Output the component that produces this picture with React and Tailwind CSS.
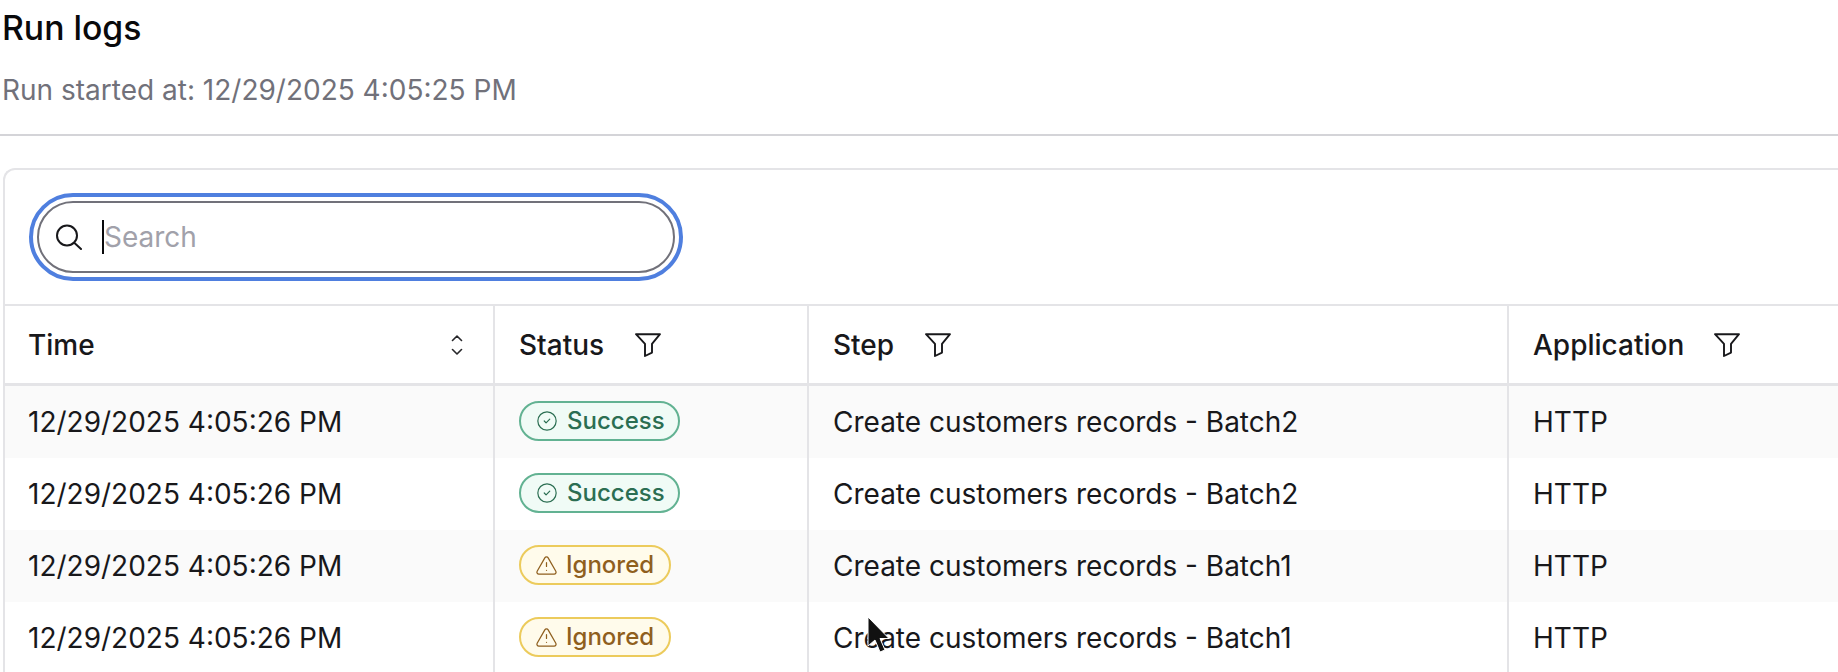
import React from 'react'
import { CircleCheck, TriangleAlert } from 'lucide-react'

const rows = [
  { time: '12/29/2025 4:05:26 PM', status: 'Success', step: 'Create customers records - Batch2', app: 'HTTP' },
  { time: '12/29/2025 4:05:26 PM', status: 'Success', step: 'Create customers records - Batch2', app: 'HTTP' },
  { time: '12/29/2025 4:05:26 PM', status: 'Ignored', step: 'Create customers records - Batch1', app: 'HTTP' },
  { time: '12/29/2025 4:05:26 PM', status: 'Ignored', step: 'Create customers records - Batch1', app: 'HTTP' },
]

const FilterIcon = () => (
  <svg width="26" height="24" viewBox="0 0 26 24" fill="none" stroke="#18181b" strokeWidth="1.9" strokeLinejoin="round">
    <path d="M1 1.2H25L17 10.8V19.6L10 23V10.8Z" />
  </svg>
)

const SortIcon = () => (
  <svg width="12" height="20" viewBox="0 0 12 20" fill="none" stroke="#27272a" strokeWidth="1.6" strokeLinecap="round" strokeLinejoin="round">
    <path d="M1.5 5.5L6 1L10.5 5.5" />
    <path d="M1.5 14.5L6 19L10.5 14.5" />
  </svg>
)

const StatusBadge = ({ status }) => {
  if (status === 'Success') {
    return (
      <span className="mb-[2px] inline-flex h-10 w-[161px] items-center gap-[9px] rounded-full border-2 border-[#62b292] bg-[#f0fbf6] pl-[15px] text-[24px] font-[450] text-[#2b6e52]">
        <CircleCheck size={22} strokeWidth={1.3} className="text-[#2b6e52]" />
        {status}
      </span>
    )
  }
  return (
    <span className="mb-[2px] inline-flex h-10 w-[152px] items-center gap-[8px] rounded-full border-2 border-[#eccb5c] bg-[#fffbeb] pl-[14px] text-[24px] font-[450] text-[#8f5f1e]">
      <TriangleAlert size={23} strokeWidth={1.3} className="text-[#8f5f1e]" />
      {status}
    </span>
  )
}

const App = () => {
  return (
    <div className="relative h-[672px] overflow-hidden bg-white pl-[3px] font-['Inter',sans-serif] text-[#18181b]">
      <h1 className="-ml-[1px] pt-[8px] text-[33.75px] leading-[40px] font-medium text-[#09090b]">Run logs</h1>
      <p className="mt-[22px] -ml-[1px] text-[28px] leading-[40px] text-[#71717a]">Run started at: 12/29/2025 4:05:25 PM</p>
      <div className="mt-[24px] -ml-[3px] h-[2px] bg-[#d4d4d8]" />

      <div className="mt-[32px] rounded-tl-[12px] border-t-2 border-l-2 border-[#e4e4e7]">
        <div className="h-[134px] pt-[23px] pl-[24px]">
          <div className="flex h-[88px] w-[654px] items-center rounded-full border-[4px] border-[#4f7fdf] p-[4px]">
            <div className="flex h-[72px] flex-1 items-center rounded-full border-2 border-[#71717a] pl-[16px]">
              <svg width="28" height="26" viewBox="0 0 28 26" fill="none" stroke="#18181b" strokeWidth="2" strokeLinecap="round">
                <circle cx="12" cy="11.5" r="10" />
                <path d="M19.5 19L26 25" />
              </svg>
              <span className="ml-[19px] h-[34px] w-[2px] bg-[#09090b]" />
              <span className="text-[28px] leading-[40px] text-[#a1a1aa]">Search</span>
            </div>
          </div>
        </div>

        <div className="grid h-[82px] grid-cols-[488px_314px_700px_1fr] border-t-2 border-b-[3px] border-[#e4e4e7] text-[28px] font-medium text-[#18181b]">
          <div className="flex items-center justify-between pr-[30px] pl-[23px]">
            Time
            <SortIcon />
          </div>
          <div className="flex items-center gap-[31px] border-l-2 border-[#e4e4e7] pl-[24px]">
            Status
            <FilterIcon />
          </div>
          <div className="flex items-center gap-[31px] border-l-2 border-[#e4e4e7] pl-[24px]">
            Step
            <FilterIcon />
          </div>
          <div className="flex items-center gap-[30px] border-l-2 border-[#e4e4e7] pl-[24px]">
            Application
            <FilterIcon />
          </div>
        </div>

        {rows.map((row, i) => (
          <div
            key={i}
            className={`grid h-[72px] grid-cols-[488px_314px_700px_1fr] text-[28px] ${i % 2 === 0 ? 'bg-[#fafafa]' : 'bg-white'}`}
          >
            <div className="flex items-center pl-[23px]">{row.time}</div>
            <div className="flex items-center border-l-2 border-[#e4e4e7] pl-[24px]">
              <StatusBadge status={row.status} />
            </div>
            <div className="flex items-center border-l-2 border-[#e4e4e7] pl-[24px]">{row.step}</div>
            <div className="flex items-center border-l-2 border-[#e4e4e7] pl-[24px]">{row.app}</div>
          </div>
        ))}
      </div>

      {/* mouse pointer caught in the capture */}
      <svg className="absolute top-[616px] left-[867px]" width="26" height="40" viewBox="0 0 26 40">
        <path d="M1 1V30L8 24L13 36L18 34L13 22.5H22Z" fill="#111" stroke="#fff" strokeWidth="1" />
      </svg>
    </div>
  )
}

export default App
